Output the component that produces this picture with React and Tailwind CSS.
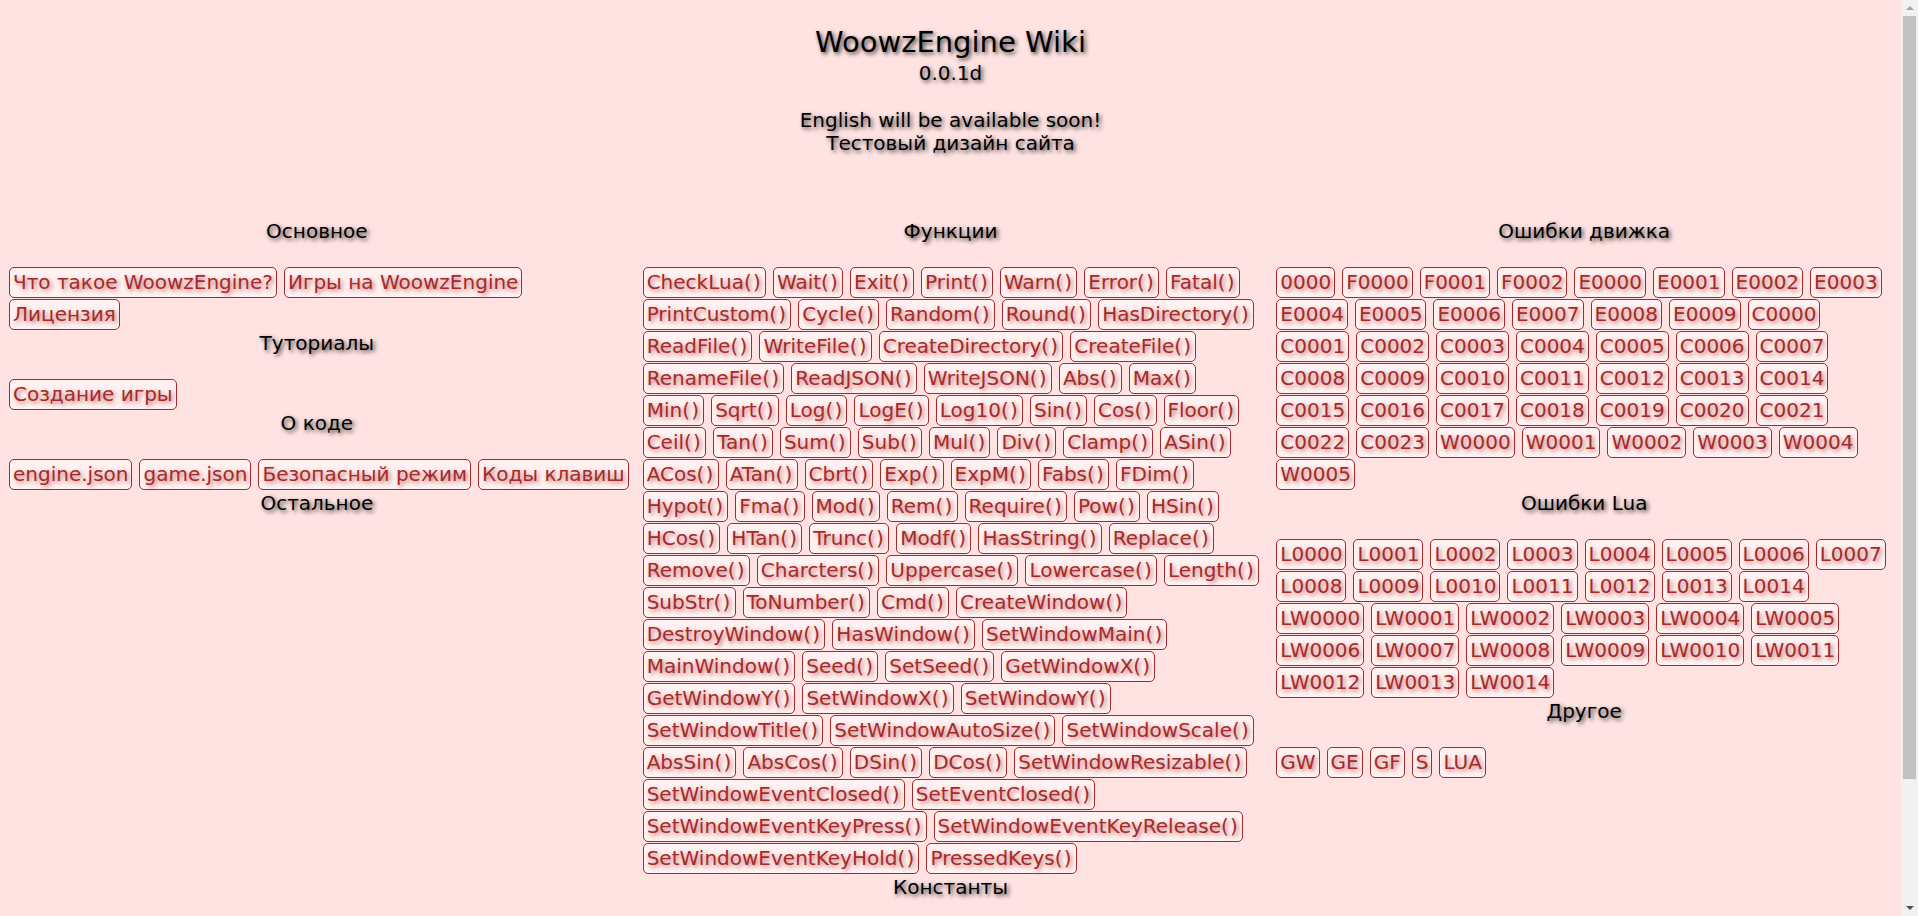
import React from "react";

const col1 = [
  { title: "Основное", rows: [["Что такое WoowzEngine?", "Игры на WoowzEngine"], ["Лицензия"]] },
  { title: "Туториалы", rows: [["Создание игры"]] },
  { title: "О коде", rows: [["engine.json", "game.json", "Безопасный режим", "Коды клавиш"]] },
  { title: "Остальное", rows: [] },
];

const fn = (s) => s.split(" ").map((x) => x + "()");

const col2 = [
  {
    title: "Функции",
    rows: [
      fn("CheckLua Wait Exit Print Warn Error Fatal"),
      fn("PrintCustom Cycle Random Round HasDirectory"),
      fn("ReadFile WriteFile CreateDirectory CreateFile"),
      fn("RenameFile ReadJSON WriteJSON Abs Max"),
      fn("Min Sqrt Log LogE Log10 Sin Cos Floor"),
      fn("Ceil Tan Sum Sub Mul Div Clamp ASin"),
      fn("ACos ATan Cbrt Exp ExpM Fabs FDim"),
      fn("Hypot Fma Mod Rem Require Pow HSin"),
      fn("HCos HTan Trunc Modf HasString Replace"),
      fn("Remove Charcters Uppercase Lowercase Length"),
      fn("SubStr ToNumber Cmd CreateWindow"),
      fn("DestroyWindow HasWindow SetWindowMain"),
      fn("MainWindow Seed SetSeed GetWindowX"),
      fn("GetWindowY SetWindowX SetWindowY"),
      fn("SetWindowTitle SetWindowAutoSize SetWindowScale"),
      fn("AbsSin AbsCos DSin DCos SetWindowResizable"),
      fn("SetWindowEventClosed SetEventClosed"),
      fn("SetWindowEventKeyPress SetWindowEventKeyRelease"),
      fn("SetWindowEventKeyHold PressedKeys"),
    ],
  },
  { title: "Константы", rows: [] },
];

const sp = (s) => s.split(" ");

const col3 = [
  {
    title: "Ошибки движка",
    rows: [
      sp("0000 F0000 F0001 F0002 E0000 E0001 E0002 E0003"),
      sp("E0004 E0005 E0006 E0007 E0008 E0009 C0000"),
      sp("C0001 C0002 C0003 C0004 C0005 C0006 C0007"),
      sp("C0008 C0009 C0010 C0011 C0012 C0013 C0014"),
      sp("C0015 C0016 C0017 C0018 C0019 C0020 C0021"),
      sp("C0022 C0023 W0000 W0001 W0002 W0003 W0004"),
      sp("W0005"),
    ],
  },
  {
    title: "Ошибки Lua",
    rows: [
      sp("L0000 L0001 L0002 L0003 L0004 L0005 L0006 L0007"),
      sp("L0008 L0009 L0010 L0011 L0012 L0013 L0014"),
      sp("LW0000 LW0001 LW0002 LW0003 LW0004 LW0005"),
      sp("LW0006 LW0007 LW0008 LW0009 LW0010 LW0011"),
      sp("LW0012 LW0013 LW0014"),
    ],
  },
  { title: "Другое", rows: [sp("GW GE GF S LUA")] },
];

function Btn({ label }) {
  const isFn = label.endsWith("()");
  return (
    <a
      href="#"
      className="h-[31px] px-[3px] border border-[#a52a2a] rounded-[5px] bg-[#fff1f1] text-[#a52a2a] text-[20px] leading-[29px] whitespace-nowrap no-underline [text-shadow:2px_2px_4px_rgba(165,42,42,0.65)]"
    >
      {isFn ? (
        <>
          {label.slice(0, -2)}
          <span className="tracking-[1.2px]">()</span>
        </>
      ) : (
        label
      )}
    </a>
  );
}

function Section({ title, rows }) {
  return (
    <div>
      <div className="h-[24px] leading-[24px] text-center text-[20px] text-black [text-shadow:2px_2px_4px_rgba(0,0,0,0.75)]">
        {title}
      </div>
      <div className="h-[24px]" />
      {rows.map((r, i) => (
        <div key={i} className="h-[32px] flex gap-[7px] pl-[9px]">
          {r.map((b) => (
            <Btn key={b} label={b} />
          ))}
        </div>
      ))}
    </div>
  );
}

function Column({ sections }) {
  return (
    <div className="flex flex-col">
      {sections.map((s) => (
        <Section key={s.title} {...s} />
      ))}
    </div>
  );
}

export default function App() {
  return (
    <div className="h-screen w-full flex overflow-hidden bg-[#ffe3e3] font-['DejaVu_Sans',Verdana,sans-serif]">
      <main className="flex-1 min-w-0">
        <header className="pt-[23px] text-center text-black [text-shadow:2px_2px_4px_rgba(0,0,0,0.75)]">
          <h1 className="text-[29px] leading-[39px] font-normal">WoowzEngine Wiki</h1>
          <div className="text-[20px] leading-[23px]">0.0.1d</div>
          <div className="h-[24px]" />
          <div className="text-[20px] leading-[23px]">English will be available soon!</div>
          <div className="text-[20px] leading-[23px]">Тестовый дизайн сайта</div>
        </header>
        <div className="mt-[64px] grid grid-cols-3">
          <Column sections={col1} />
          <Column sections={col2} />
          <Column sections={col3} />
        </div>
      </main>
      <div className="w-[17px] shrink-0 h-full bg-[#f1f1f1] flex flex-col">
        <div className="h-[16px] flex items-center justify-center">
          <svg width="8" height="4" viewBox="0 0 8 4">
            <polygon points="0,4 4,0 8,4" fill="#a3a3a3" />
          </svg>
        </div>
        <div className="h-[763px] mx-[2px] bg-[#c1c1c1]" />
        <div className="flex-1" />
        <div className="h-[17px] flex items-center justify-center">
          <svg width="8" height="4" viewBox="0 0 8 4">
            <polygon points="0,0 8,0 4,4" fill="#505050" />
          </svg>
        </div>
      </div>
    </div>
  );
}
